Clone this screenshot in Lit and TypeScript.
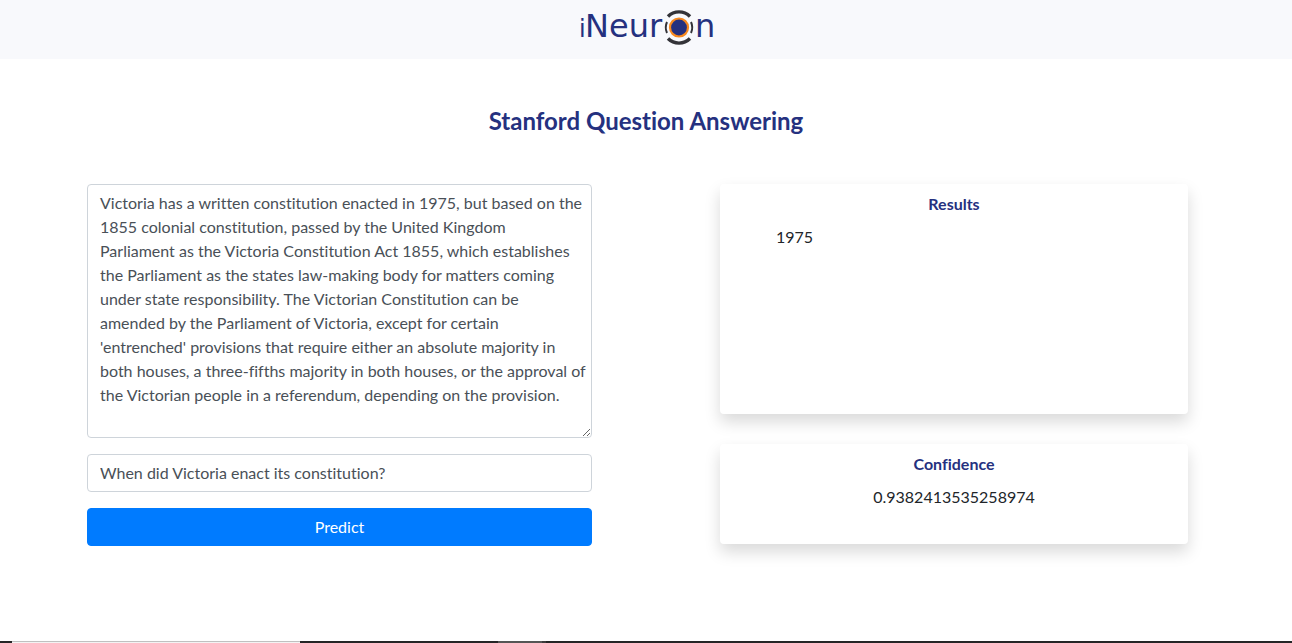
import { LitElement, html, css } from "lit";
import { customElement, state } from "lit/decorators.js";

@customElement("app-root")
export class AppRoot extends LitElement {
  static styles = css`
    :host {
      display: flex;
      flex-direction: column;
      min-height: 100vh;
      background: #fff;
      color: #212529;
      font-family: Lato, sans-serif;
      font-size: 16px;
      font-variant-ligatures: none;
      line-height: 24px;
    }
    * {
      box-sizing: border-box;
    }
    .bar {
      display: flex;
      justify-content: center;
      padding: 8px 16px;
      background: #f8f9fc;
    }
    .logo {
      display: block;
      width: 136px;
      height: 43px;
      overflow: visible;
    }
    .word {
      font-family: "DejaVu Sans", sans-serif;
      fill: #25317f;
    }
    .big {
      font-size: 32px;
    }
    .small {
      font-size: 24px;
    }
    h1 {
      margin: 47px 0 48px;
      color: #25317f;
      font-size: 24px;
      font-weight: 700;
      line-height: 30px;
      text-align: center;
    }
    .content {
      display: grid;
      grid-template-columns: 505fr 468fr;
      column-gap: 128px;
      align-items: start;
      padding: 0 104px 0 87px;
      flex: 1;
    }
    form {
      display: flex;
      flex-direction: column;
      gap: 16px;
    }
    .field {
      display: block;
      width: 100%;
      margin: 0;
      padding: 6px 12px;
      border: 1px solid #ced4da;
      border-radius: 4px;
      background: #fff;
      color: #495057;
      font: inherit;
      font-variant-ligatures: none;
      outline: none;
    }
    textarea.field {
      padding-right: 4px;
      resize: vertical;
      overflow: auto;
    }
    .predict {
      padding: 6px 12px;
      border: 1px solid #007bff;
      border-radius: 4px;
      background: #007bff;
      color: #fff;
      font: inherit;
      cursor: pointer;
    }
    .cards {
      display: flex;
      flex-direction: column;
      gap: 30px;
    }
    .card {
      padding: 8px 56px;
      border-radius: 4px;
      background: #fff;
      box-shadow: 0 8px 16px rgba(0, 0, 0, 0.15);
    }
    .results {
      min-height: 230px;
    }
    .confidence {
      min-height: 100px;
      text-align: center;
    }
    h2 {
      margin: 0 0 9px;
      color: #25317f;
      font-size: 16px;
      font-weight: 700;
      text-align: center;
    }
    p {
      margin: 0;
    }
    .strip {
      display: flex;
      height: 2px;
      background: #252526;
    }
    .search {
      width: 288px;
      margin-left: 12px;
      margin-right: 198px;
      border-top: 1px solid #c0c0c0;
      background: #f3f3f3;
    }
    .task {
      width: 44px;
      background: #555;
    }
    .edge {
      width: 4px;
      background: #3c3c3c;
    }
  `;

  @state() private context =
    "Victoria has a written constitution enacted in 1975, but based on the 1855 colonial constitution, passed by the United Kingdom\nParliament as the Victoria Constitution Act 1855, which establishes the Parliament as the states law-making body for matters coming under state responsibility. The Victorian Constitution can be amended by the Parliament of Victoria, except for certain 'entrenched' provisions that require either an absolute majority in both houses, a three-fifths majority in both houses, or the approval of\nthe Victorian people in a referendum, depending on the provision.";
  @state() private question = "When did Victoria enact its constitution?";
  @state() private answer = "1975";
  @state() private score = "0.9382413535258974";

  render() {
    return html`
      <header class="bar">
        <svg class="logo" viewBox="0 0 136 43" role="img" aria-label="iNeuron">
          <text class="word small" x="1" y="29">i</text>
          <text class="word big" x="7" y="29">Neur</text>
          <text class="word big" x="117" y="29">n</text>
          <circle cx="101" cy="19.5" r="9" fill="#25317f" stroke="#f7891f" stroke-width="2.2" />
          <g fill="none" stroke="#333338">
            <path d="M90 8.5A15.5 15.5 0 0 1 112 8.5" stroke-width="3.4" />
            <path d="M90 30.5A15.5 15.5 0 0 0 112 30.5" stroke-width="3.4" />
            <path d="M89 14A13.2 13.2 0 0 0 89 25M113 14A13.2 13.2 0 0 1 113 25" stroke-width="2" />
          </g>
        </svg>
      </header>
      <h1>Stanford Question Answering</h1>
      <main class="content">
        <form @submit=${(e: Event) => e.preventDefault()}>
          <textarea
            class="field"
            aria-label="Context"
            rows="10"
            spellcheck="false"
            .value=${this.context}
            @input=${(e: Event) => (this.context = (e.target as HTMLTextAreaElement).value)}
          ></textarea>
          <input
            class="field"
            aria-label="Question"
            type="text"
            .value=${this.question}
            @input=${(e: Event) => (this.question = (e.target as HTMLInputElement).value)}
          />
          <button class="predict" type="submit">Predict</button>
        </form>
        <div class="cards">
          <section class="card results">
            <h2>Results</h2>
            <p>${this.answer}</p>
          </section>
          <section class="card confidence">
            <h2>Confidence</h2>
            <p>${this.score}</p>
          </section>
        </div>
      </main>
      <footer class="strip">
        <div class="search"></div>
        <div class="task"></div>
        <div class="edge"></div>
      </footer>
    `;
  }
}
